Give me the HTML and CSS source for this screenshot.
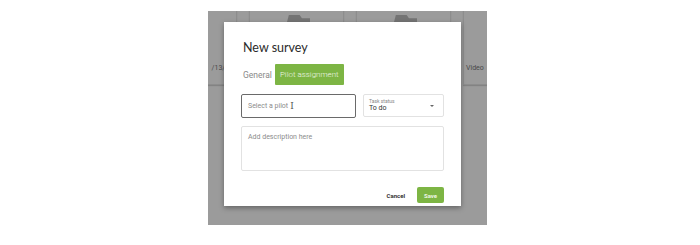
FILE: index.html
```html
<!DOCTYPE html>
<html lang="en">
<head>
    <meta charset="UTF-8">
    <meta name="viewport" content="width=device-width, initial-scale=1.0">
    <title>New survey</title>
    <link rel="stylesheet" href="styles.css">
</head>
<body>
    <div class="backdrop">
        <div class="card-row">
            <div class="card"><span class="card-text date">/13/2020</span></div>
            <div class="card"><div class="folder"></div></div>
            <div class="card"><div class="folder"></div></div>
            <div class="card"><span class="card-text">Video</span></div>
        </div>

        <div class="modal">
            <h2 class="modal-title">New survey</h2>
            <div class="tabs">
                <span class="tab">General</span>
                <span class="tab active">Pilot assignment</span>
            </div>
            <div class="field-row">
                <div class="input pilot">
                    <span class="placeholder">Select a pilot</span>
                    <span class="ibeam">I</span>
                </div>
                <div class="input status">
                    <div>
                        <div class="status-label">Task status</div>
                        <div class="status-value">To do</div>
                    </div>
                    <span class="arrow"></span>
                </div>
            </div>
            <div class="input description">
                <span class="placeholder">Add description here</span>
            </div>
            <div class="actions">
                <button class="btn-cancel">Cancel</button>
                <button class="btn-save">Save</button>
            </div>
        </div>
    </div>
</body>
</html>
```

FILE: styles.css
```css
body{
    margin: 0;
    background: #fff;
    font-family: Roboto, "Liberation Sans", sans-serif;
}
.backdrop{
    position: relative;
    margin: 11px 0 0 208px;
    width: 279px;
    height: 214px;
    background: #9b9b9b;
    overflow: hidden;
}
.card-row{
    display: flex;
    gap: 12px;
    margin-left: -66px;
    margin-top: -30px;
}
.card{
    position: relative;
    flex: 0 0 95px;
    height: 104px;
    border: 1px solid #8d8d8d;
    box-sizing: border-box;
    box-shadow: 0 1px 1px rgba(0,0,0,.15);
    display: flex;
    align-items: flex-end;
    justify-content: center;
}
.card-text{
    font-size: 7px;
    color: #4a4a4a;
    margin-bottom: 12px;
}
.card-text.date{
    margin-left: auto;
    margin-right: -5px;
}
.card:last-child .card-text{
    margin-right: auto;
    margin-left: 2px;
}
.folder{
    position: absolute;
    top: 33px;
    left: 37px;
    width: 23px;
    height: 7px;
    background: #747474;
    clip-path: polygon(0 100%, 8% 0, 55% 0, 65% 45%, 100% 45%, 100% 100%);
}
.modal{
    position: absolute;
    left: 16px;
    top: 11px;
    width: 237px;
    height: 184px;
    box-sizing: border-box;
    padding: 18px 17px 0 17px;
    background: #fff;
    box-shadow: 0 2px 5px rgba(0,0,0,.35);
}
.modal-title{
    margin: 0 0 8px 2px;
    font-family: Lato, "Noto Sans", sans-serif;
    font-weight: 400;
    font-size: 12.5px;
    line-height: 16px;
    color: #2b2b2b;
}
.tabs{
    display: flex;
    align-items: center;
    margin-left: 2px;
    height: 21px;
}
.tab{
    font-size: 8.5px;
    font-weight: 400;
    color: #8a8a8a;
    padding-right: 3px;
}
.tab.active{
    display: flex;
    align-items: center;
    height: 21px;
    padding: 0 5px;
    background: #7db544;
    color: #eef6e6;
    font-size: 8px;
    font-weight: 300;
    border-radius: 1px;
}
.field-row{
    display: flex;
    gap: 7px;
    margin-top: 9px;
}
.input{
    box-sizing: border-box;
    border: 1px solid #e2e2e2;
    border-radius: 2px;
    background: #fff;
    display: flex;
    align-items: center;
    padding: 0 6px;
}
.pilot{
    width: 115px;
    height: 24px;
    border-color: #6a6a6a;
}
.placeholder{
    font-size: 7px;
    color: #8c8c8c;
}
.ibeam{
    font-family: "DejaVu Serif", serif;
    font-size: 9px;
    color: #555;
    margin-left: 2px;
}
.status{
    width: 81px;
    height: 23px;
    justify-content: space-between;
    padding: 0 6px 0 5px;
}
.status-label{
    font-size: 5px;
    color: #888;
    line-height: 6px;
}
.status-value{
    font-size: 7px;
    color: #333;
    line-height: 9px;
}
.arrow{
    width: 0;
    height: 0;
    border-left: 2px solid transparent;
    border-right: 2px solid transparent;
    border-top: 2px solid #666;
    margin-right: 3px;
}
.description{
    margin-top: 8px;
    width: 203px;
    height: 45px;
    align-items: flex-start;
    padding-top: 6px;
}
.actions{
    display: flex;
    justify-content: flex-end;
    align-items: center;
    gap: 12px;
    margin-top: 16px;
}
.actions button{
    font-family: Roboto, "Liberation Sans", sans-serif;
    font-size: 6px;
    font-weight: 700;
    border: none;
    cursor: pointer;
}
.btn-cancel{
    background: none;
    color: #333;
    padding: 0;
}
.btn-save{
    width: 27px;
    height: 16px;
    padding: 0;
    background: #7db544;
    color: #eef6e6;
    border-radius: 2px;
}
```
